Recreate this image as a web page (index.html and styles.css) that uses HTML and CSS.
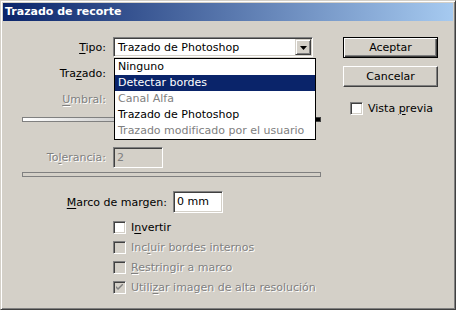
FILE: index.html
```html
<!DOCTYPE html>
<html lang="es">
<head>
<meta charset="utf-8">
<title>Trazado de recorte</title>
<link rel="stylesheet" href="styles.css">
</head>
<body>
<div class="window">
  <div class="titlebar">Trazado de recorte</div>
  <div class="body">
    <div class="left">
      <div class="row r-tipo">
        <span class="lbl"><u>T</u>ipo:</span>
        <div class="select">
          <span class="select-text">Trazado de Photoshop</span>
          <span class="select-btn"><svg width="7" height="4" viewBox="0 0 7 4"><path d="M0 0H7L3.5 4Z" fill="#000"/></svg></span>
        </div>
        <ul class="dropdown">
          <li>Ninguno</li>
          <li class="sel">Detectar bordes</li>
          <li class="dis">Canal Alfa</li>
          <li>Trazado de Photoshop</li>
          <li class="dis">Trazado modificado por el usuario</li>
        </ul>
      </div>
      <div class="row r-trazado">
        <span class="lbl">Tra<u>z</u>ado:</span>
      </div>
      <div class="row r-umbral">
        <span class="lbl disabled"><u>U</u>mbral:</span>
      </div>
      <div class="track track-grad"><span class="thumb"></span></div>
      <div class="row r-tol">
        <span class="lbl disabled">To<u>l</u>erancia:</span>
        <div class="input input-dis">2</div>
      </div>
      <div class="track track-plain"></div>
      <div class="row r-marco">
        <span class="lbl lbl-wide"><u>M</u>arco de margen:</span>
        <div class="input">0 mm</div>
      </div>
      <div class="checks">
        <div class="check"><span class="box"></span><span>I<u>n</u>vertir</span></div>
        <div class="check dis"><span class="box"></span><span class="disabled">Inc<u>l</u>uir bordes internos</span></div>
        <div class="check dis"><span class="box"></span><span class="disabled"><u>R</u>estringir a marco</span></div>
        <div class="check dis"><span class="box"><svg width="7" height="7" viewBox="0 0 7 7"><path d="M0 2V4L2 6L7 1V-1L2 4Z" fill="#808080"/></svg></span><span class="disabled">Utili<u>z</u>ar imagen de alta resolución</span></div>
      </div>
    </div>
    <div class="right">
      <div class="btn btn-default"><span>Aceptar</span></div>
      <div class="btn btn-cancel"><span>Cancelar</span></div>
      <div class="check preview"><span class="box"></span><span>Vista <u>p</u>revia</span></div>
    </div>
  </div>
</div>
</body>
</html>
```
FILE: styles.css
```css
html, body {
  margin: 0;
  padding: 0;
  background: #d4d0c8;
}
body {
  font-family: "DejaVu Sans", sans-serif;
  font-size: 11px;
  color: #000;
}
u { text-decoration: underline; text-underline-offset: 2px; }
.window {
  width: 456px;
  height: 310px;
  box-sizing: border-box;
  background: #d4d0c8;
  border: 1px solid;
  border-color: #d4d0c8 #404040 #404040 #d4d0c8;
  box-shadow: inset 1px 1px #fff, inset -1px -1px #808080;
  padding: 2px;
}
.titlebar {
  height: 18px;
  line-height: 18px;
  background: linear-gradient(to right, #0a246a, #a6caf0);
  color: #fff;
  font-weight: bold;
  padding-left: 2px;
}
.body {
  display: flex;
}
.left {
  width: 330px;
  padding-top: 16px;
}
.row {
  display: flex;
  align-items: center;
  height: 20px;
  position: relative;
}
.lbl {
  width: 103px;
  text-align: right;
  margin-right: 7px;
  flex: none;
}
.lbl-wide {
  width: 164px;
  margin-right: 6px;
}
.disabled {
  color: #808080;
  text-shadow: 1px 1px #fff;
}
.r-trazado, .r-umbral { margin-top: 6px; }
.select {
  width: 200px;
  height: 20px;
  box-sizing: border-box;
  background: #fff;
  border: 1px solid;
  border-color: #808080 #fff #fff #808080;
  box-shadow: inset 1px 1px #404040, inset -1px -1px #d4d0c8;
  display: flex;
  align-items: center;
  padding: 2px 2px 2px 4px;
}
.select-text { flex: 1; }
.select-btn {
  width: 16px;
  height: 16px;
  box-sizing: border-box;
  background: #d4d0c8;
  border: 1px solid;
  border-color: #d4d0c8 #404040 #404040 #d4d0c8;
  box-shadow: inset 1px 1px #fff, inset -1px -1px #808080;
  display: flex;
  align-items: center;
  justify-content: center;
  margin-right: -1px;
}
.select-btn svg { display: block; margin-top: 1px; }
.dropdown {
  position: absolute;
  left: 111px;
  top: 21px;
  width: 200px;
  margin: 0;
  padding: 0;
  list-style: none;
  background: #fff;
  border: 1px solid #000;
  z-index: 2;
}
.dropdown li {
  height: 16px;
  line-height: 16px;
  padding-left: 3px;
}
.dropdown li.sel {
  background: #0a246a;
  color: #fff;
}
.dropdown li.dis { color: #808080; }
.track {
  margin: 8px 0 0 19px;
  width: 299px;
  height: 5px;
  box-sizing: border-box;
  border: 1px solid #808080;
  position: relative;
}
.track-grad {
  background: linear-gradient(to right, #fff, #606060);
}
.thumb {
  position: absolute;
  right: -1px;
  top: -1px;
  width: 8px;
  height: 5px;
  box-sizing: border-box;
  background: #000;
  border: 1px solid #404040;
}
.r-tol { margin-top: 25px; height: 21px; }
.track-plain {
  margin-top: 4px;
  background: #d4d0c8;
}
.input {
  width: 50px;
  height: 21px;
  box-sizing: border-box;
  background: #fff;
  border: 1px solid;
  border-color: #808080 #fff #fff #808080;
  box-shadow: inset 1px 1px #404040, inset -1px -1px #d4d0c8;
  line-height: 19px;
  padding-left: 3px;
}
.input-dis {
  background: #d4d0c8;
  color: #808080;
}
.r-marco { margin-top: 14px; height: 22px; }
.r-marco .input { height: 22px; line-height: 20px; }
.checks {
  margin-top: 4px;
  padding-left: 110px;
}
.check {
  display: flex;
  align-items: center;
  height: 20px;
}
.box {
  width: 13px;
  height: 13px;
  box-sizing: border-box;
  background: #fff;
  border: 1px solid;
  border-color: #808080 #fff #fff #808080;
  box-shadow: inset 1px 1px #404040, inset -1px -1px #d4d0c8;
  margin-right: 5px;
  flex: none;
  display: flex;
  align-items: center;
  justify-content: center;
}
.check.dis .box { background: #d4d0c8; }
.right {
  margin-left: 10px;
  padding-top: 16px;
}
.btn {
  width: 95px;
  height: 21px;
  box-sizing: border-box;
  background: #d4d0c8;
  border: 1px solid;
  border-color: #fff #404040 #404040 #fff;
  box-shadow: inset -1px -1px #808080;
  display: flex;
  align-items: center;
  justify-content: center;
}
.btn-default {
  border: 1px solid #000;
  box-shadow: inset 1px 1px #fff, inset -1px -1px #404040, inset -2px -2px #808080;
}
.btn-cancel { margin-top: 8px; }
.preview {
  margin-top: 11px;
  padding-left: 7px;
}
```
